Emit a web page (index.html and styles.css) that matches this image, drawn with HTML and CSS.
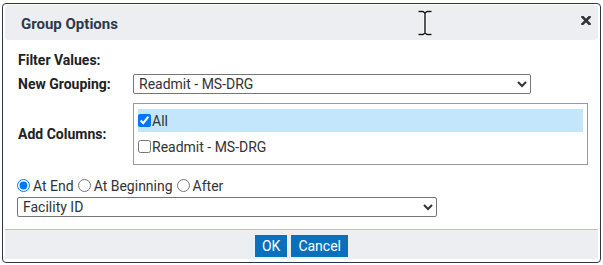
FILE: index.html
```html
<!DOCTYPE html>
<html lang="en">
<head>
    <meta charset="UTF-8">
    <title>Group Options</title>
    <link rel="stylesheet" href="styles.css">
</head>
<body>
    <div class="dialog">
        <div class="titlebar">
            <span class="title">Group Options</span>
            <button class="close-button" title="Close">
                <svg width="10" height="9" viewBox="0 0 10 9"><path d="M1.5 1 L8.5 8 M8.5 1 L1.5 8" stroke="#333" stroke-width="2.6" stroke-linecap="square"/></svg>
            </button>
        </div>

        <div class="content">
            <div class="section-title">Filter Values:</div>

            <div class="form-row grouping-row">
                <label class="form-label" for="grouping">New Grouping:</label>
                <select id="grouping" class="form-select grouping-select">
                    <option>Readmit - MS-DRG</option>
                </select>
            </div>

            <div class="form-row">
                <span class="form-label">Add Columns:</span>
                <div class="listbox">
                    <label class="list-option selected"><input type="checkbox" checked>All</label>
                    <label class="list-option"><input type="checkbox">Readmit - MS-DRG</label>
                </div>
            </div>

            <div class="position-row">
                <label><input type="radio" name="pos" checked>At End</label>
                <label><input type="radio" name="pos">At Beginning</label>
                <label><input type="radio" name="pos">After</label>
            </div>

            <select class="form-select after-select">
                <option>Facility ID</option>
            </select>
        </div>

        <div class="buttonpane">
            <button class="dialog-button">OK</button>
            <button class="dialog-button">Cancel</button>
        </div>
    </div>

    <!-- mouse cursor captured in the screenshot -->
    <svg class="cursor" width="16" height="26" viewBox="0 0 16 26">
        <path d="M1.5 1.5 H6 L8 3 L10 1.5 H14.5 M8 3 V23 M1.5 24.5 H6 L8 23 L10 24.5 H14.5" fill="none" stroke="#fff" stroke-width="3"/>
        <path d="M1.5 1.5 H6 L8 3 L10 1.5 H14.5 M8 3 V23 M1.5 24.5 H6 L8 23 L10 24.5 H14.5" fill="none" stroke="#111" stroke-width="1.4"/>
    </svg>
</body>
</html>
```

FILE: styles.css
```css
* {
    box-sizing: border-box;
}

body {
    margin: 0;
    padding: 3px 0 0 2px;
    font-family: Roboto, 'Liberation Sans', sans-serif;
    font-size: 14px;
    color: #222;
    background: white;
}

.dialog {
    width: 599px;
    height: 260px;
    border: 1px solid #2b3a4a;
    border-radius: 4px;
    padding: 1px 2px 3px 2px;
    display: flex;
    flex-direction: column;
    background: white;
}

.titlebar {
    height: 35px;
    background: #eceef1;
    border-radius: 4px;
    display: flex;
    align-items: center;
    justify-content: space-between;
    padding: 0 6px 0 16px;
    flex-shrink: 0;
}

.title {
    font-size: 15px;
    font-weight: bold;
    color: #2b3a4a;
    margin-top: 2px;
}

.close-button {
    border: none;
    background: none;
    padding: 0;
    width: 12px;
    height: 12px;
    display: flex;
    align-items: center;
    justify-content: center;
    margin-top: -4px;
    cursor: pointer;
}

.content {
    flex: 1;
    padding: 12px 0 0 12px;
}

.section-title {
    font-weight: bold;
    line-height: 16px;
    padding-left: 1px;
    margin-bottom: 6px;
}

.form-row {
    display: grid;
    grid-template-columns: 116px auto;
    align-items: center;
    justify-content: start;
}

.grouping-row {
    margin-bottom: 9px;
}

.form-label {
    font-weight: bold;
    padding-left: 1px;
}

.form-select {
    height: 20px;
    font-family: Roboto, 'Liberation Sans', sans-serif;
    font-size: 14px;
    color: #333;
    border: 1px solid #767676;
    border-radius: 2px;
    background: white;
    padding: 0 1px;
}

.grouping-select {
    width: 398px;
}

.after-select {
    width: 420px;
    display: block;
    margin-top: 3px;
}

.listbox {
    width: 455px;
    height: 62px;
    border: 1px solid #999;
    padding: 5px 4px 0 4px;
}

.list-option {
    display: flex;
    align-items: center;
    height: 23px;
    color: #333;
}

.list-option + .list-option {
    margin-top: 3px;
}

.list-option.selected {
    background: #c3e6fc;
}

.list-option input {
    margin: 0 1px 0 0;
    width: 13px;
    height: 13px;
}

.position-row {
    display: flex;
    align-items: center;
    height: 17px;
    margin-top: 12px;
    color: #333;
}

.position-row label {
    display: flex;
    align-items: center;
    margin-right: 4px;
}

.position-row input {
    margin: 0 3px 0 0;
    width: 13px;
    height: 13px;
}

.buttonpane {
    height: 30px;
    flex-shrink: 0;
    border-top: 1px solid #cbbcb4;
    background: #eceef1;
    display: flex;
    justify-content: center;
    gap: 4px;
    padding-top: 5px;
}

.dialog-button {
    height: 22px;
    padding: 0 7px;
    border: none;
    background: #0a70bd;
    color: white;
    font-family: Roboto, 'Liberation Sans', sans-serif;
    font-size: 14px;
    cursor: pointer;
}

.cursor {
    position: absolute;
    left: 417px;
    top: 10px;
}
```
